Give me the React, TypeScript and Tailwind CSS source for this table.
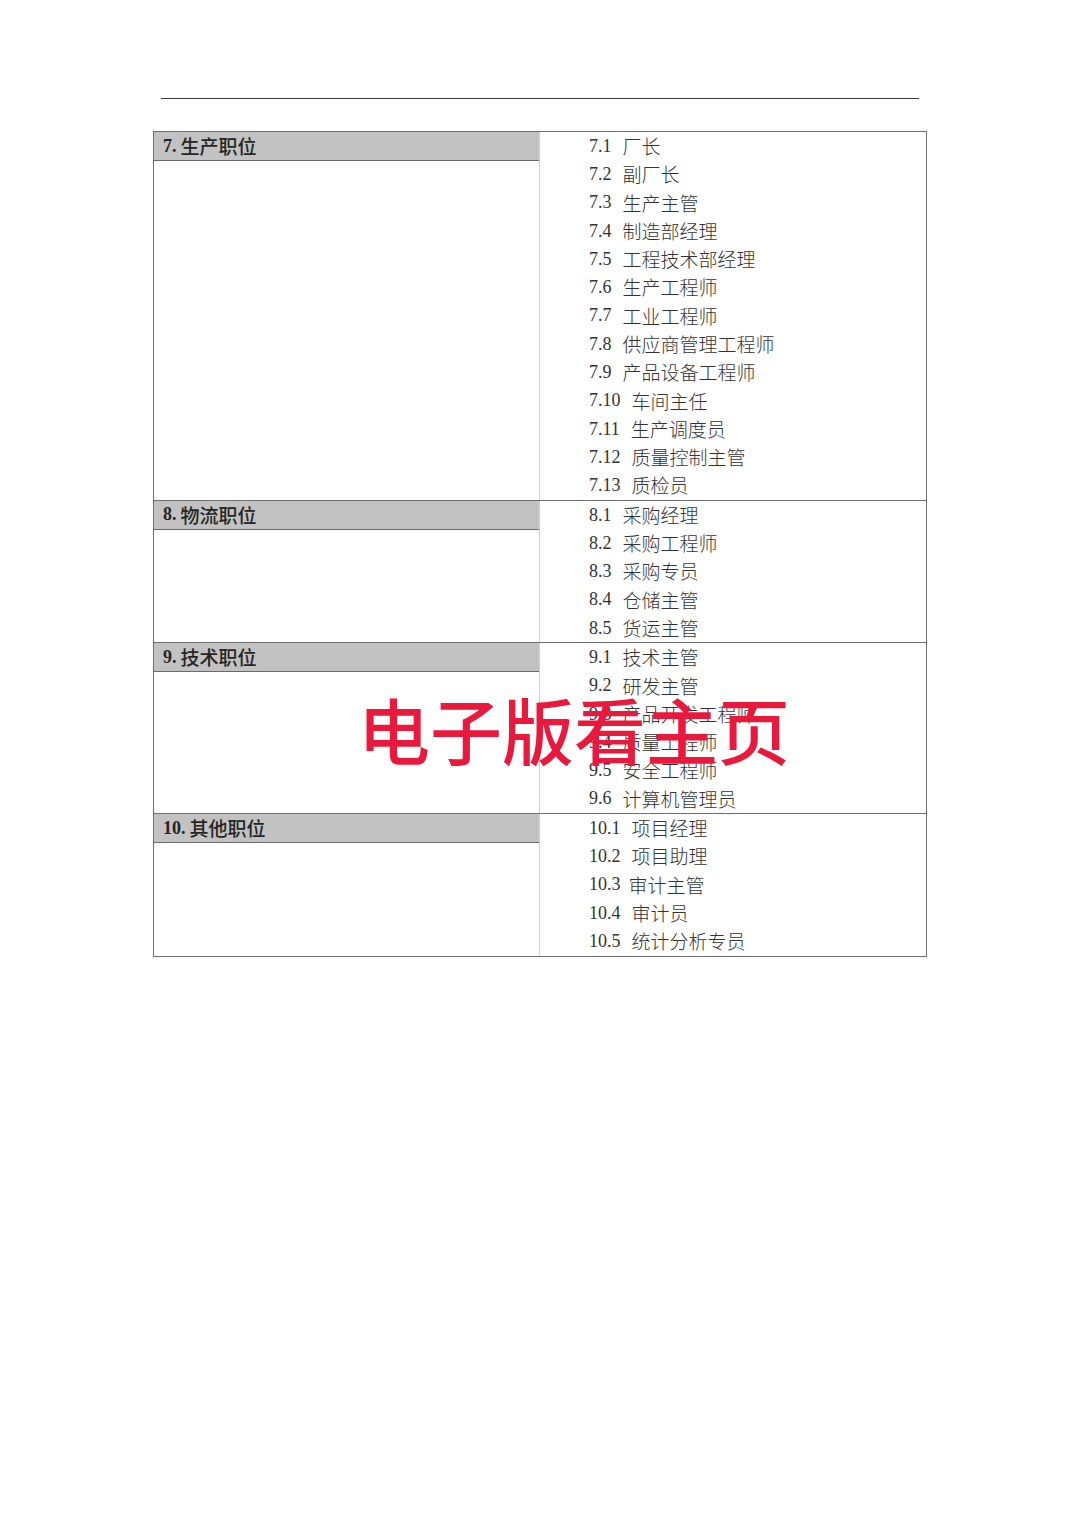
import React from "react";

type Item = { n: string; t: string; gap?: number };
type Section = { title: string; num: string; items: Item[] };

const sections: Section[] = [
  {
    num: "7.",
    title: "生产职位",
    items: [
      { n: "7.1", t: "厂长" },
      { n: "7.2", t: "副厂长" },
      { n: "7.3", t: "生产主管" },
      { n: "7.4", t: "制造部经理" },
      { n: "7.5", t: "工程技术部经理" },
      { n: "7.6", t: "生产工程师" },
      { n: "7.7", t: "工业工程师" },
      { n: "7.8", t: "供应商管理工程师" },
      { n: "7.9", t: "产品设备工程师" },
      { n: "7.10", t: "车间主任" },
      { n: "7.11", t: "生产调度员" },
      { n: "7.12", t: "质量控制主管" },
      { n: "7.13", t: "质检员" },
    ],
  },
  {
    num: "8.",
    title: "物流职位",
    items: [
      { n: "8.1", t: "采购经理" },
      { n: "8.2", t: "采购工程师" },
      { n: "8.3", t: "采购专员" },
      { n: "8.4", t: "仓储主管" },
      { n: "8.5", t: "货运主管" },
    ],
  },
  {
    num: "9.",
    title: "技术职位",
    items: [
      { n: "9.1", t: "技术主管" },
      { n: "9.2", t: "研发主管" },
      { n: "9.3", t: "产品开发工程师" },
      { n: "9.4", t: "质量工程师" },
      { n: "9.5", t: "安全工程师" },
      { n: "9.6", t: "计算机管理员" },
    ],
  },
  {
    num: "10.",
    title: "其他职位",
    items: [
      { n: "10.1", t: "项目经理" },
      { n: "10.2", t: "项目助理" },
      { n: "10.3", t: "审计主管", gap: 8 },
      { n: "10.4", t: "审计员" },
      { n: "10.5", t: "统计分析专员" },
    ],
  },
];

export default function App() {
  return (
    <div className="relative w-[1080px] h-[1528px] bg-white overflow-hidden">
      <div className="pt-[98px] pl-[161px]">
        <div className="h-px w-[758px] bg-[#3a3a3a]" />
      </div>
      <div className="ml-[153px] mt-[32px] w-[774px] border border-[#6e6e6e]">
        {sections.map((s, i) => (
          <div
            key={s.title}
            className={i === 0 ? "flex" : "flex border-t border-[#6e6e6e]"}
          >
            <div className="w-[386px] border-r border-[#cfcfcf]">
              <div className="h-[29px] bg-[#c2c2c2] border-b border-[#6a6a6a] pl-[9px] flex items-center text-[#252525]">
                <span className="font-['Liberation_Serif',serif] text-[18px] font-bold">
                  {s.num}
                </span>
                <span className="ml-[4px] font-['Noto_Sans_CJK_SC',sans-serif] text-[19px] font-medium">
                  {s.title}
                </span>
              </div>
            </div>
            <div className="flex-1 pl-[49px]">
              {s.items.map((it) => (
                <div
                  key={it.n}
                  className="flex items-center h-[28.3px] text-[#333333]"
                >
                  <span className="font-['Liberation_Serif',serif] text-[18px]">
                    {it.n}
                  </span>
                  <span
                    className="font-['Noto_Sans_CJK_SC',sans-serif] font-light text-[19px]"
                    style={{ marginLeft: it.gap ?? 11 }}
                  >
                    {it.t}
                  </span>
                </div>
              ))}
            </div>
          </div>
        ))}
      </div>
      <div className="absolute left-[358px] top-[692px] text-[72px] leading-none font-medium text-[#e8193c] font-['Noto_Sans_CJK_SC',sans-serif] whitespace-nowrap">
        电子版看主页
      </div>
    </div>
  );
}
